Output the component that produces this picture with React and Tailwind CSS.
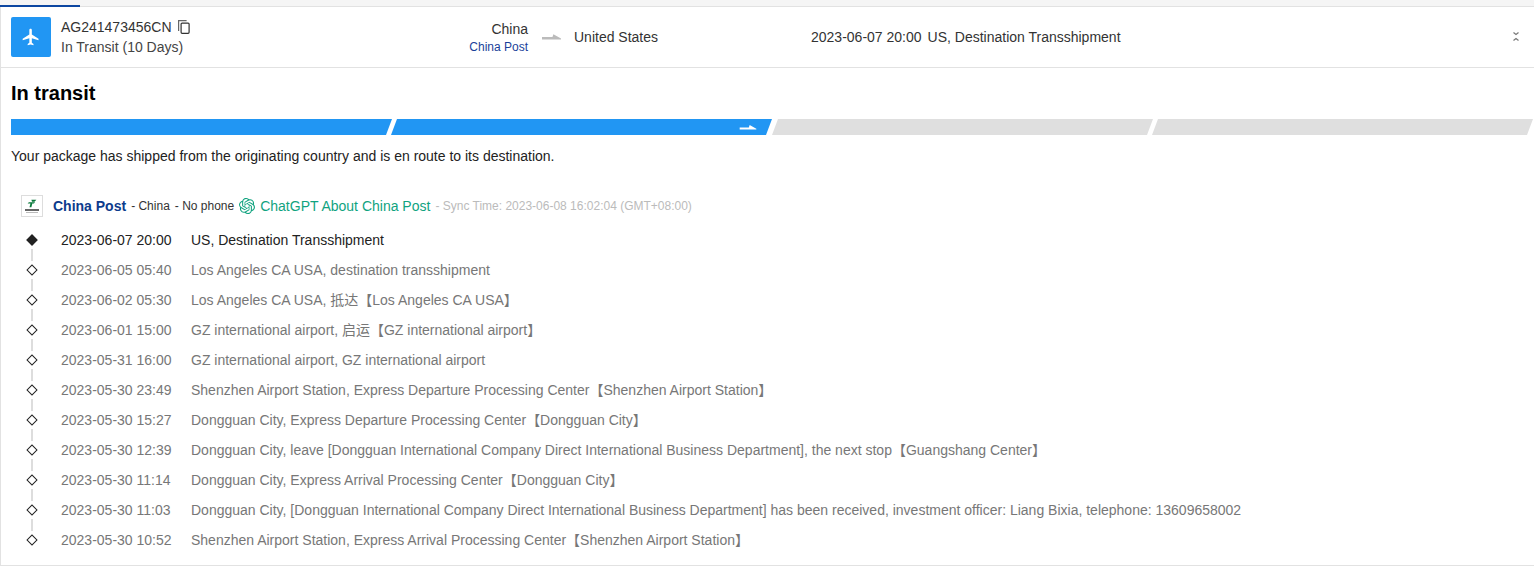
import React from "react";
import { MdFlight } from "react-icons/md";
import { SiOpenai } from "react-icons/si";

const events = [
  ["2023-06-05 05:40", "Los Angeles CA USA, destination transshipment"],
  ["2023-06-02 05:30", "Los Angeles CA USA, 抵达【Los Angeles CA USA】"],
  ["2023-06-01 15:00", "GZ international airport, 启运【GZ international airport】"],
  ["2023-05-31 16:00", "GZ international airport, GZ international airport"],
  ["2023-05-30 23:49", "Shenzhen Airport Station, Express Departure Processing Center【Shenzhen Airport Station】"],
  ["2023-05-30 15:27", "Dongguan City, Express Departure Processing Center【Dongguan City】"],
  ["2023-05-30 12:39", "Dongguan City, leave [Dongguan International Company Direct International Business Department], the next stop【Guangshang Center】"],
  ["2023-05-30 11:14", "Dongguan City, Express Arrival Processing Center【Dongguan City】"],
  ["2023-05-30 11:03", "Dongguan City, [Dongguan International Company Direct International Business Department] has been received, investment officer: Liang Bixia, telephone: 13609658002"],
  ["2023-05-30 10:52", "Shenzhen Airport Station, Express Arrival Processing Center【Shenzhen Airport Station】"],
];

function Row({ time, text, first, last }) {
  return (
    <div className="flex h-[30px] items-center relative">
      <div className="w-[42px] shrink-0 flex justify-center relative h-full items-center">
        <span className={`w-[8px] h-[8px] rotate-45 border border-[#222] ${first ? "bg-[#222]" : "bg-white"}`} />
        {!last && <span className="absolute left-[20px] top-[24px] w-[2px] h-[12px] bg-[#ddd]" />}
      </div>
      <span className={`w-[138px] shrink-0 pl-[8px] ${first ? "text-[#222]" : "text-[#777]"}`}>{time}</span>
      <span className={`${first ? "text-[#222]" : "text-[#777]"} whitespace-nowrap`}>{text}</span>
    </div>
  );
}

function Arrow({ className, color }) {
  return (
    <svg viewBox="0 0 20 6" className={className}>
      <path d="M0 3h11l1-3 8 4.5v1H0z" fill={color} />
    </svg>
  );
}

function CopyIcon() {
  return (
    <svg viewBox="0 0 12 14" className="w-[12px] h-[14px] ml-[6px] shrink-0" fill="none" stroke="#333" strokeWidth="1.2">
      <path d="M.6 11V.6h8" stroke="#666" />
      <rect x="3.1" y="3.1" width="8" height="10.2" rx="1" />
    </svg>
  );
}

function PostLogo() {
  return (
    <div className="w-[22px] h-[22px] border border-[#ddd] flex flex-col items-center justify-center bg-white shrink-0">
      <svg viewBox="0 0 16 12" className="w-[10px] h-[9px]">
        <path d="M7 0h8l-3 3H8zM3 4h10l-2 2H8.5L7 12H4l1.5-6H1z" fill="#0a7a3c" />
      </svg>
      <div className="w-[14px] h-[2px] mt-[1px] bg-[#666]" />
      <div className="w-[12px] h-[1px] mt-[1px] bg-[#bbb]" />
    </div>
  );
}

export default function App() {
  return (
    <div className="w-[1534px] h-[571px] overflow-hidden bg-white text-[14px] leading-[20px] text-[#222] font-['Liberation_Sans','Noto_Sans_CJK_SC',sans-serif]">
      <div className="h-[7px] bg-[#f5f5f5] border-b border-[#e2e2e2] relative">
        <div className="absolute left-0 bottom-[-1px] w-[80px] h-[2px] bg-[#0d47a1]" />
      </div>
      <div className="border-l border-[#e2e2e2] h-[559px] border-b">
        <div className="h-[61px] flex items-center border-b border-[#e2e2e2] pl-[10px] relative">
          <div className="w-[40px] h-[40px] rounded-[2px] bg-[#2196f3] flex items-center justify-center shrink-0">
            <MdFlight size={20} color="white" />
          </div>
          <div className="ml-[10px] w-[300px] shrink-0">
            <div className="flex items-center h-[20px]">
              <span className="text-[#333]">AG241473456CN</span>
              <CopyIcon />
            </div>
            <div className="text-[#444]">In Transit (10 Days)</div>
          </div>
          <div className="w-[167px] shrink-0 text-right">
            <div className="text-[#333]">China</div>
            <div className="text-[12px] leading-[16px] text-[#1a3f9a]">China Post</div>
          </div>
          <Arrow className="w-[19px] h-[6px] ml-[14px] shrink-0" color="#bbb" />
          <span className="ml-[13px] w-[237px] shrink-0 text-[#333]">United States</span>
          <span className="text-[#333]">2023-06-07 20:00</span>
          <span className="ml-[6px] text-[#333]">US, Destination Transshipment</span>
          <svg viewBox="0 0 6 9" className="absolute left-[1512px] top-[25px] w-[6px] h-[9px]" fill="none" stroke="#777" strokeWidth="1.2">
            <path d="M.5 .5L3 2.5 5.5 .5M.5 8.5L3 6.5 5.5 8.5" />
          </svg>
        </div>
        <div className="pl-[10px]">
          <h2 className="text-[20px] leading-[24px] font-bold text-black mt-[13px]">In transit</h2>
          <div className="flex mt-[14px]">
            <div className="w-[381px] shrink-0 h-[16px] bg-[#2196f3] [clip-path:polygon(0_0,100%_0,calc(100%-6px)_100%,0_100%)]" />
            <div className="w-[381px] shrink-0 h-[16px] -ml-[1px] bg-[#2196f3] [clip-path:polygon(6px_0,100%_0,calc(100%-6px)_100%,0_100%)] flex items-center justify-end pr-[14px]">
              <Arrow className="w-[20px] h-[5px]" color="#fff" />
            </div>
            <div className="w-[381px] shrink-0 h-[16px] bg-[#dfdfdf] [clip-path:polygon(6px_0,100%_0,calc(100%-6px)_100%,0_100%)]" />
            <div className="w-[381px] shrink-0 h-[16px] -ml-[1px] bg-[#dfdfdf] [clip-path:polygon(6px_0,100%_0,calc(100%-6px)_100%,0_100%)]" />
          </div>
          <p className="mt-[11px] text-[#222]">Your package has shipped from the originating country and is en route to its destination.</p>
        </div>
        <div className="flex items-center mt-[29px] pl-[20px] h-[22px] whitespace-nowrap">
          <PostLogo />
          <span className="ml-[10px] font-bold text-[#0d3b8c]">China Post</span>
          <span className="ml-[5px] text-[12px] text-[#333]">- China</span>
          <span className="ml-[5px] text-[12px] text-[#333]">- No phone</span>
          <span className="ml-[5px]"><SiOpenai size={16} color="#10a37f" /></span>
          <span className="ml-[5px] text-[#10a37f]">ChatGPT About China Post</span>
          <span className="ml-[5px] text-[12px] text-[#bbb]">- Sync Time: 2023-06-08 16:02:04 (GMT+08:00)</span>
        </div>
        <div className="mt-[8px] pl-[10px]">
          <Row first time="2023-06-07 20:00" text="US, Destination Transshipment" />
          {events.map((e, i) => (
            <Row key={i} time={e[0]} text={e[1]} last={i === events.length - 1} />
          ))}
        </div>
      </div>
    </div>
  );
}
